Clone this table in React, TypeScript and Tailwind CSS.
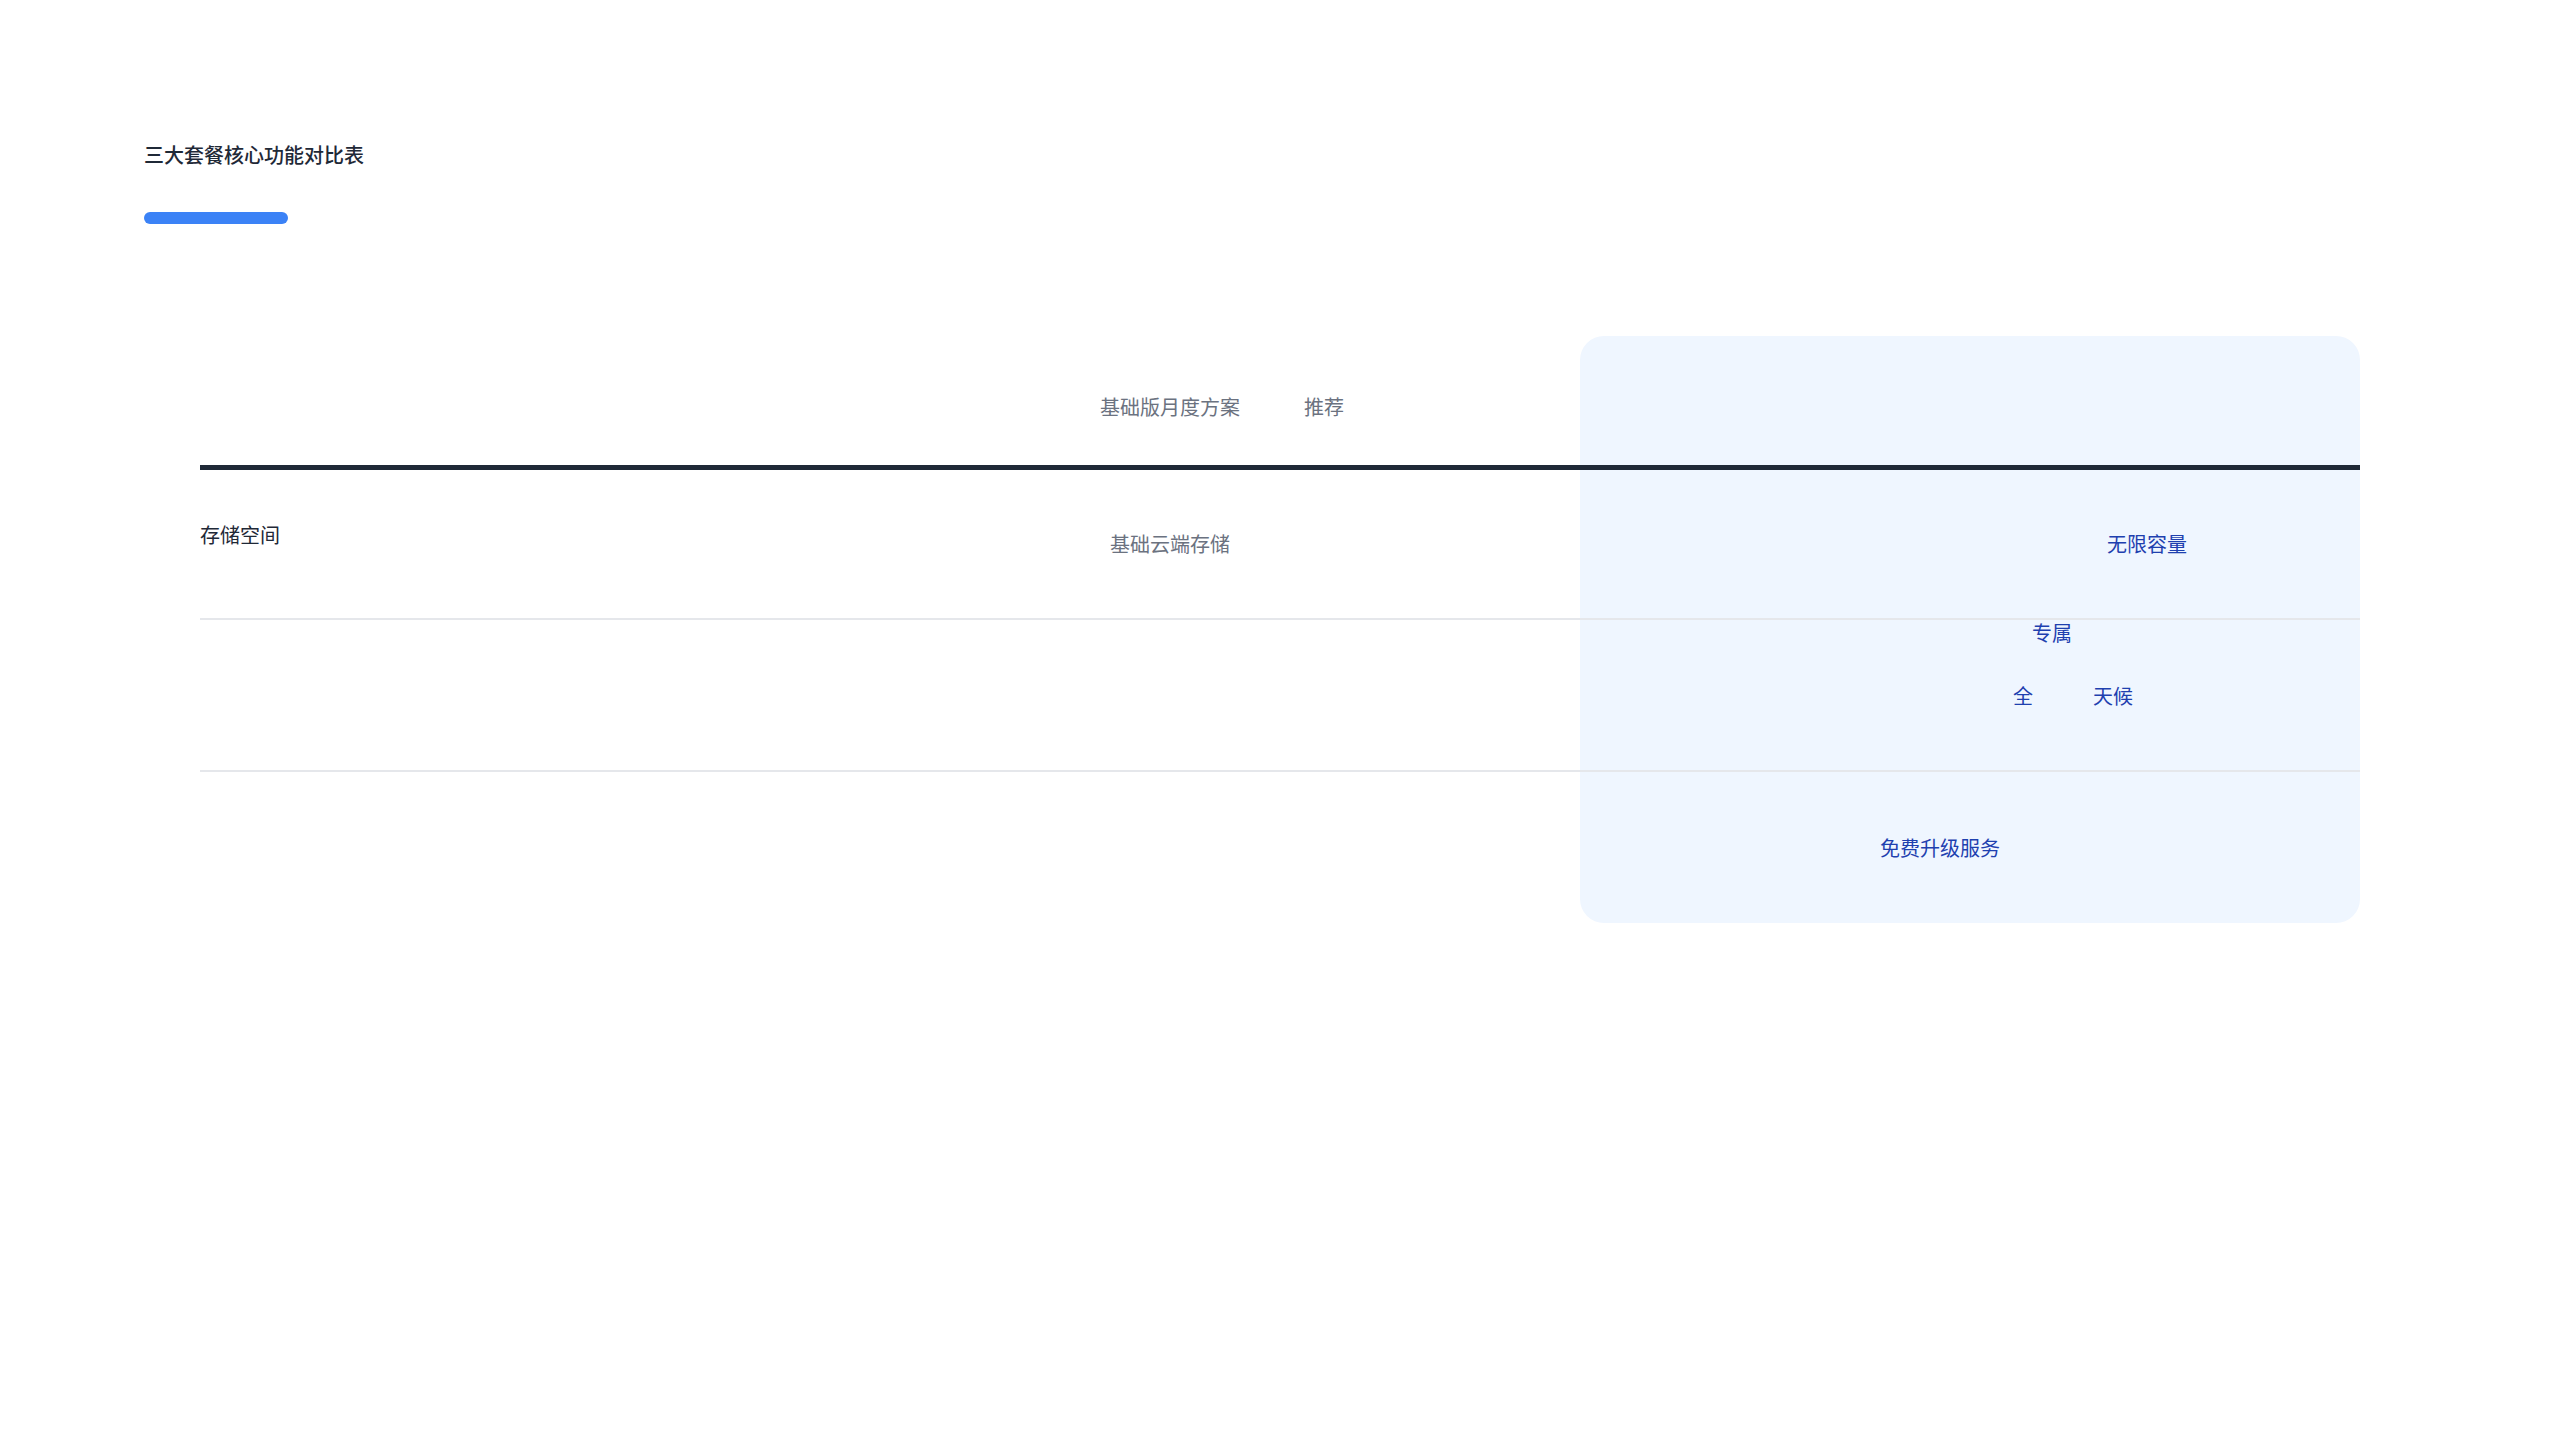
const rows = [
  { label: "存储空间", basic: "基础云端存储" },
  { label: "", basic: "" },
  { label: "", basic: "" },
];

const App = () => (
  <div className="min-h-screen bg-white pl-[144px] pt-[141px] font-['Noto_Sans_CJK_SC','Noto_Sans',sans-serif] text-[20px] leading-[28px]">
    <h1 className="text-[20px] font-medium leading-[28px] text-[#1f2937]">三大套餐核心功能对比表</h1>
    <div className="mt-[43px] h-[12px] w-[144px] rounded-full bg-[#3b82f6]" />

    <div className="relative ml-[56px] mt-[112px] w-[2160px]">
      {/* highlighted plan column */}
      <div className="absolute bottom-0 left-[1380px] right-0 top-0 rounded-3xl bg-[#eff6ff]" />

      <div className="relative grid h-[134px] grid-cols-[560px_820px_780px] border-b-[5px] border-[#1f2937] pt-[57px]">
        <div />
        <div className="flex justify-center text-[#6b7280]">
          <span className="relative">
            基础版月度方案
            <span className="absolute left-full top-0 ml-[64px] whitespace-nowrap">推荐</span>
          </span>
        </div>
        <div />
      </div>

      <div className="relative grid h-[150px] grid-cols-[560px_820px_780px] border-b-2 border-[#e5e7eb]">
        <div className="pt-[51px] text-[#1f2937]">{rows[0].label}</div>
        <div className="flex items-center justify-center text-[#6b7280]">{rows[0].basic}</div>
        <div className="flex items-center pl-[527px] text-[#1e40af]">无限容量</div>
      </div>

      <div className="relative grid h-[152px] grid-cols-[560px_820px_780px] border-b-2 border-[#e5e7eb]">
        <div />
        <div />
        <div className="flex flex-col text-[#1e40af]">
          <span className="-mt-px pl-[452px]">专属</span>
          <span className="mt-[35px] flex pl-[433px]">
            <span>全</span>
            <span className="ml-[60px]">天候</span>
          </span>
        </div>
      </div>

      <div className="relative grid h-[151px] grid-cols-[560px_820px_780px]">
        <div />
        <div />
        <div className="flex items-center pl-[300px] text-[#1e40af]">免费升级服务</div>
      </div>
    </div>
  </div>
);

export default App;
